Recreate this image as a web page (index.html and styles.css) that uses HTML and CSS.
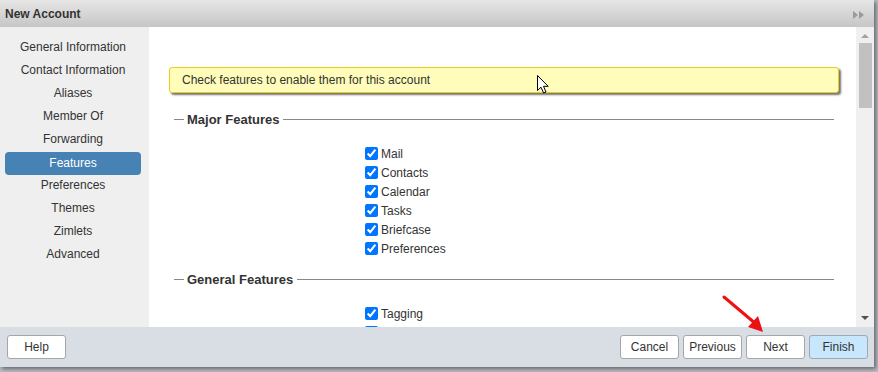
FILE: index.html
```html
<!DOCTYPE html>
<html lang="en">
<head>
  <meta charset="UTF-8" />
  <meta name="viewport" content="width=device-width, initial-scale=1.0"/>
  <title>New Account</title>
  <link rel="stylesheet" href="styles.css">
</head>
<body>
  <div class="dialog">

    <!-- Title bar -->
    <div class="titlebar">
      <span class="title">New Account</span>
      <svg class="title-icon" width="12" height="8" viewBox="0 0 12 8">
        <polygon points="0,0 5,4 0,8" fill="#9a9a9a"/>
        <polygon points="6,0 11,4 6,8" fill="#9a9a9a"/>
      </svg>
    </div>

    <div class="dialog-body">
      <!-- Left navigation -->
      <ul class="nav">
        <li>General Information</li>
        <li>Contact Information</li>
        <li>Aliases</li>
        <li>Member Of</li>
        <li>Forwarding</li>
        <li class="active">Features</li>
        <li>Preferences</li>
        <li>Themes</li>
        <li>Zimlets</li>
        <li>Advanced</li>
      </ul>

      <!-- Content -->
      <div class="content">
        <div class="hint">Check features to enable them for this account</div>

        <div class="group-title">
          <span class="rule-short"></span>
          <span class="group-label">Major Features</span>
          <span class="rule-long"></span>
        </div>
        <div class="checks">
          <label class="check"><input type="checkbox" checked> Mail</label>
          <label class="check"><input type="checkbox" checked> Contacts</label>
          <label class="check"><input type="checkbox" checked> Calendar</label>
          <label class="check"><input type="checkbox" checked> Tasks</label>
          <label class="check"><input type="checkbox" checked> Briefcase</label>
          <label class="check"><input type="checkbox" checked> Preferences</label>
        </div>

        <div class="group-title group-general">
          <span class="rule-short"></span>
          <span class="group-label">General Features</span>
          <span class="rule-long"></span>
        </div>
        <div class="checks">
          <label class="check"><input type="checkbox" checked> Tagging</label>
          <label class="check"><input type="checkbox" checked></label>
        </div>

        <!-- mouse pointer from the screenshot -->
        <svg class="pointer" width="13" height="19" viewBox="0 0 13 19">
          <path d="M0.5,0.5 L0.5,15.5 L4,12.2 L6.6,18 L9,17 L6.5,11.3 L11.2,11.3 Z" fill="#fff" stroke="#000" stroke-width="1"/>
        </svg>
      </div>

      <!-- Scrollbar -->
      <div class="scrollbar">
        <span class="scroll-arrow up"></span>
        <div class="scroll-track">
          <div class="scroll-thumb"></div>
        </div>
        <span class="scroll-arrow down"></span>
      </div>
    </div>

    <!-- Footer -->
    <div class="footer">
      <button class="btn">Help</button>
      <div class="footer-right">
        <button class="btn">Cancel</button>
        <button class="btn">Previous</button>
        <button class="btn">Next</button>
        <button class="btn btn-primary">Finish</button>
      </div>
    </div>

    <!-- red annotation arrow -->
    <svg class="annotation" width="50" height="42" viewBox="0 0 50 42">
      <line x1="2" y1="2" x2="34" y2="29" stroke="#ee1111" stroke-width="3" stroke-linecap="round"/>
      <polygon points="41,37 26,32 36,21" fill="#ee1111"/>
    </svg>
  </div>
</body>
</html>
```

FILE: styles.css
```css
body {
  margin: 0;
  font-family: "Liberation Sans", Arial, sans-serif;
  background-color: #b9bcc2;
  width: 878px;
  height: 372px;
  overflow: hidden;
}

.dialog {
  position: relative;
  width: 874px;
  height: 367px;
  background: #fff;
  display: flex;
  flex-direction: column;
  box-shadow: 2px 2px 4px rgba(0, 0, 0, 0.45);
}

/* Title bar */
.titlebar {
  height: 27px;
  flex: none;
  display: flex;
  align-items: center;
  justify-content: space-between;
  padding: 0 9px 0 5px;
  box-sizing: border-box;
  background: linear-gradient(#e6e6e6, #c6c6c6);
}

.title {
  font-size: 12px;
  font-weight: bold;
  color: #333;
}

.title-icon {
  margin-top: 2px;
}

.dialog-body {
  flex: 1;
  display: flex;
  min-height: 0;
}

/* Left navigation */
.nav {
  list-style: none;
  margin: 0;
  padding: 9px 0 0;
  width: 149px;
  flex: none;
  background: #efefef;
}

.nav li {
  width: 136px;
  height: 23px;
  line-height: 23px;
  margin-left: 5px;
  text-align: center;
  font-size: 12px;
  color: #333;
}

.nav li.active {
  background: #4682b4;
  color: #fff;
  border-radius: 4px;
  line-height: 21px;
  height: 22px;
  margin-top: 1px;
  margin-bottom: -1px;
  padding-top: 1px;
}

/* Content */
.content {
  position: relative;
  flex: 1;
  overflow: hidden;
  padding-top: 40px;
}

.hint {
  margin: 0 17px 0 20px;
  height: 24px;
  line-height: 24px;
  padding-left: 12px;
  font-size: 12px;
  color: #333;
  background: #fffdb9;
  border: 1px solid #ebcc1c;
  border-radius: 3px;
  box-shadow: 2px 2px 2px rgba(0, 0, 0, 0.55);
}

.group-title {
  display: flex;
  align-items: center;
  height: 16px;
  margin: 18px 22px 0 25px;
}

.group-general {
  margin-top: 13px;
}

.rule-short {
  width: 10px;
  border-top: 1px solid #888;
}

.rule-long {
  flex: 1;
  border-top: 1px solid #888;
}

.group-label {
  font-size: 13px;
  font-weight: bold;
  color: #333;
  padding: 0 4px 0 3px;
}

.checks {
  display: flex;
  flex-direction: column;
  padding: 17px 0 0 216px;
}

.check {
  display: flex;
  align-items: center;
  height: 19px;
  font-size: 12px;
  color: #333;
}

.check input {
  margin: 0 3px 0 0;
  width: 13px;
  height: 13px;
}

.pointer {
  position: absolute;
  left: 388px;
  top: 48px;
}

/* Scrollbar */
.scrollbar {
  width: 18px;
  flex: none;
  background: #f0f0f0;
  display: flex;
  flex-direction: column;
  align-items: center;
}

.scroll-arrow {
  width: 0;
  height: 0;
  border-left: 4px solid transparent;
  border-right: 4px solid transparent;
  margin: 7px 0;
}

.scroll-arrow.up {
  border-bottom: 4px solid #a3a3a3;
}

.scroll-arrow.down {
  border-top: 4px solid #505050;
}

.scroll-track {
  flex: 1;
  width: 13px;
  margin-left: 1px;
}

.scroll-thumb {
  height: 65px;
  margin-top: -2px;
  background: #c1c1c1;
}

/* Footer */
.footer {
  height: 40px;
  flex: none;
  display: flex;
  align-items: center;
  justify-content: space-between;
  padding: 0 6px 0 7px;
  background: #d9dde4;
}

.footer-right {
  display: flex;
  gap: 4px;
}

.btn {
  width: 59px;
  height: 24px;
  padding: 0;
  font-family: "Liberation Sans", Arial, sans-serif;
  font-size: 12px;
  color: #333;
  background: #fff;
  border: 1px solid #a6a6a6;
  border-radius: 3px;
}

.btn-primary {
  background: #c8e6fc;
  border-color: #98aabb;
}

.annotation {
  position: absolute;
  left: 722px;
  top: 295px;
}
```
